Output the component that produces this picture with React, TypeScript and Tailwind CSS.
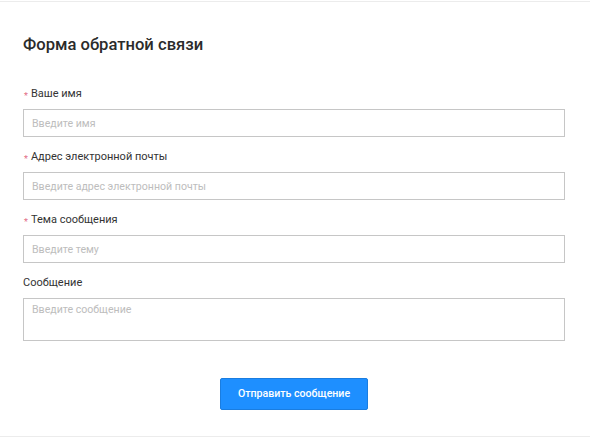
import React from 'react';

interface Field {
  label: string;
  placeholder: string;
  required: boolean;
  multiline?: boolean;
}

const fields: Field[] = [
  { label: 'Ваше имя', placeholder: 'Введите имя', required: true },
  { label: 'Адрес электронной почты', placeholder: 'Введите адрес электронной почты', required: true },
  { label: 'Тема сообщения', placeholder: 'Введите тему', required: true },
  { label: 'Сообщение', placeholder: 'Введите сообщение', required: false, multiline: true },
];

export default function App() {
  return (
    <div className="w-[590px] h-[440px] bg-white pt-px font-['Roboto',sans-serif] text-[#333]">
      <div className="border-t border-b border-[#ececec] h-[436px] px-[23px] pt-[33px]">
        {/* Title */}
        <h1 className="text-[16.6px] leading-[20px] font-medium text-[#2b2b2b]">Форма обратной связи</h1>

        {/* Fields */}
        <form className="mt-[32px] flex flex-col gap-[13px]" onSubmit={e => e.preventDefault()}>
          {fields.map(field => (
            <div key={field.label} className="flex flex-col">
              <label className="h-[14px] text-[11px] leading-[14px] text-[#333] flex items-center">
                {field.required && <span className="text-[9px] text-[#e26d86] ml-px mr-[3px] mt-[4px]">*</span>}
                {field.label}
              </label>
              {field.multiline ? (
                <textarea
                  placeholder={field.placeholder}
                  className="mt-[8px] w-[542px] h-[43px] border border-[#c6c6c6] px-[8px] pt-[4px] text-[10.6px] leading-[14px] resize-none outline-none placeholder-[#bdbdbd]"
                />
              ) : (
                <input
                  type="text"
                  placeholder={field.placeholder}
                  className="mt-[8px] w-[542px] h-[28px] border border-[#c6c6c6] px-[8px] text-[10.6px] outline-none placeholder-[#bdbdbd]"
                />
              )}
            </div>
          ))}

          {/* Submit */}
          <div className="flex justify-center mt-[24px] pr-[2px]">
            <button
              type="submit"
              className="w-[148px] h-[32px] bg-[#1e8fff] border border-[#1a7de0] rounded-[2px] text-white text-[10.6px] font-medium"
            >
              Отправить сообщение
            </button>
          </div>
        </form>
      </div>
    </div>
  );
}
